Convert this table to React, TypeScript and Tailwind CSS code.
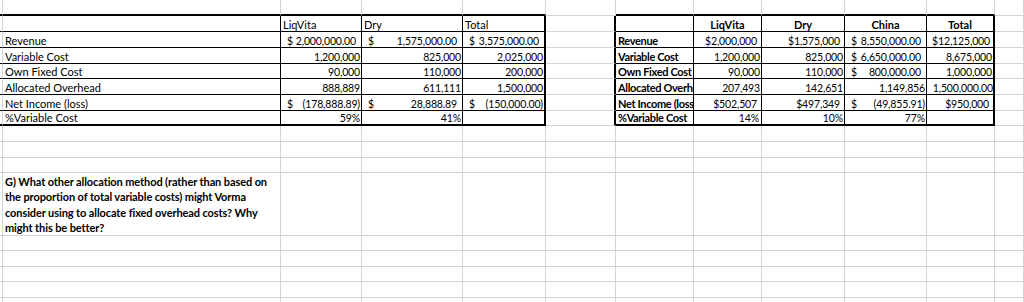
import React from "react";

type Content = React.ReactNode;

const L = ({ t, b }: { t: string; b?: boolean }) => (
  <div className={b ? "pl-[2px] font-bold tracking-[-0.35px] whitespace-nowrap" : "pl-[2px] whitespace-nowrap"}>{t}</div>
);

const PR: Record<number, string> = {
  0: "pr-0",
  1: "pr-[1px]",
  2: "pr-[2px]",
  3: "pr-[3px]",
  4: "pr-[4px]",
  5: "pr-[5px]",
};

const R = ({ t, p = 1 }: { t: string; p?: number }) => (
  <div className={"w-full text-right text-[10.5px] tracking-[-0.15px] tabular-nums whitespace-nowrap " + PR[p]}>{t}</div>
);

const A = ({ t, neg }: { t: string; neg?: boolean }) => (
  <div
    className={
      neg
        ? "flex w-full justify-between pl-[6px] pr-[1px] text-[10.5px] tracking-[-0.15px] tabular-nums whitespace-nowrap"
        : "flex w-full justify-between pl-[6px] pr-[5px] text-[10.5px] tracking-[-0.15px] tabular-nums whitespace-nowrap"
    }
  >
    <span>$</span>
    <span>{t}</span>
  </div>
);

const C = ({ t }: { t: string }) => (
  <div className="w-full text-center font-bold whitespace-nowrap">{t}</div>
);

const content: Record<string, Content> = {
  // left table
  "1-2": <L t="LiqVita" />,
  "1-3": <L t="Dry" />,
  "1-4": <L t="Total" />,
  "2-1": <L t="Revenue" />,
  "2-2": <A t="2,000,000.00" />,
  "2-3": <A t="1,575,000.00" />,
  "2-4": <A t="3,575,000.00" />,
  "3-1": <L t="Variable Cost" />,
  "3-2": <R t="1,200,000" />,
  "3-3": <R t="825,000" />,
  "3-4": <R t="2,025,000" />,
  "4-1": <L t="Own Fixed Cost" />,
  "4-2": <R t="90,000" />,
  "4-3": <R t="110,000" />,
  "4-4": <R t="200,000" />,
  "5-1": <L t="Allocated Overhead" />,
  "5-2": <R t="888,889" />,
  "5-3": <R t="611,111" />,
  "5-4": <R t="1,500,000" />,
  "6-1": <L t="Net Income (loss)" />,
  "6-2": <A t="(178,888.89)" neg />,
  "6-3": <A t="28,888.89" />,
  "6-4": <A t="(150,000.00)" neg />,
  "7-1": <L t="%Variable Cost" />,
  "7-2": <R t="59%" />,
  "7-3": <R t="41%" />,
  // right table
  "1-7": <C t="LiqVita" />,
  "1-8": <C t="Dry" />,
  "1-9": <C t="China" />,
  "1-10": <C t="Total" />,
  "2-6": <L t="Revenue" b />,
  "2-7": <R t="$2,000,000" p={4} />,
  "2-8": <R t="$1,575,000" p={4} />,
  "2-9": <A t="8,550,000.00" />,
  "2-10": <R t="$12,125,000" p={3} />,
  "3-6": <L t="Variable Cost" b />,
  "3-7": <R t="1,200,000" />,
  "3-8": <R t="825,000" />,
  "3-9": <A t="6,650,000.00" />,
  "3-10": <R t="8,675,000" />,
  "4-6": <L t="Own Fixed Cost" b />,
  "4-7": <R t="90,000" />,
  "4-8": <R t="110,000" />,
  "4-9": <A t="800,000.00" />,
  "4-10": <R t="1,000,000" />,
  "5-6": <L t="Allocated Overhead" b />,
  "5-7": <R t="207,493" />,
  "5-8": <R t="142,651" />,
  "5-9": <R t="1,149,856" />,
  "5-10": <R t="1,500,000.00" p={0} />,
  "6-6": <L t="Net Income (loss)" b />,
  "6-7": <R t="$502,507" p={4} />,
  "6-8": <R t="$497,349" p={4} />,
  "6-9": <A t="(49,855.91)" neg />,
  "6-10": <R t="$950,000" p={4} />,
  "7-6": <L t="%Variable Cost" b />,
  "7-7": <R t="14%" p={2} />,
  "7-8": <R t="10%" />,
  "7-9": <R t="77%" />,
};

const NROWS = 17;
const NCOLS = 12;

function bottomCls(r: number, c: number): string {
  const inT = c <= 4 || (c >= 6 && c <= 10);
  if ((r === 0 || r === 7) && inT) return "border-b-2 border-b-black";
  if (r >= 1 && r <= 6 && inT) return "border-b border-b-black";
  if (r === NROWS - 1) return "";
  return "border-b border-b-[#d4d4d4]";
}

function rightCls(r: number, c: number): string {
  const inRows = r >= 1 && r <= 7;
  if (inRows && (c === 4 || c === 5 || c === 10)) return "border-r-2 border-r-black";
  if (inRows && (c === 1 || c === 2 || c === 3 || c === 6 || c === 7 || c === 8 || c === 9))
    return "border-r border-r-black";
  return "border-r border-r-[#d4d4d4]";
}

export default function App() {
  const cells: React.ReactNode[] = [];
  for (let r = 0; r < NROWS; r++) {
    for (let c = 0; c < NCOLS; c++) {
      const key = `${r}-${c}`;
      if (r === 11 && c === 1) {
        cells.push(
          <div
            key={key}
            className={
              "flex items-start overflow-hidden pt-[1px] pl-[2px] font-bold leading-[15.4px] tracking-[-0.1px] whitespace-nowrap " +
              bottomCls(r, c) +
              " " +
              rightCls(r, c)
            }
          >
            <div>
              G) What other allocation method (rather than based on
              <br />
              the proportion of total variable costs) might Vorma
              <br />
              consider using to allocate fixed overhead costs? Why
              <br />
              might this be better?
            </div>
          </div>
        );
        continue;
      }
      cells.push(
        <div
          key={key}
          className={"flex items-end overflow-hidden leading-[12px] " + bottomCls(r, c) + " " + rightCls(r, c)}
        >
          {content[key] ?? null}
        </div>
      );
    }
  }

  return (
    <div className="h-[302px] w-[1024px] overflow-hidden bg-white font-[Lato,sans-serif] text-[11px] text-black">
      <div className="grid grid-cols-[3px_278px_81px_101px_83px_70px_78px_68px_83px_82px_68px_29px] grid-rows-[16px_16px_16px_16px_15px_16px_16px_15px_16px_16px_15px_63px_15px_16px_15px_16px_4px]">
        {cells}
      </div>
    </div>
  );
}
